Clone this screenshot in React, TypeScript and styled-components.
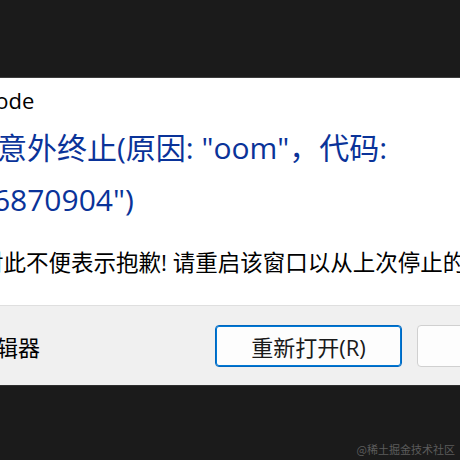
import React from 'react';
import styled, { createGlobalStyle } from 'styled-components';

const GlobalStyle = createGlobalStyle`
  html, body {
    margin: 0;
    padding: 0;
    background: #1b1b1b;
  }
  body {
    width: 460px;
    height: 460px;
    overflow: hidden;
    font-family: "Open Sans", "Noto Sans CJK SC", sans-serif;
  }
`;

const Screen = styled.div`
  position: relative;
  width: 460px;
  height: 460px;
  overflow: hidden;
  padding-top: 77px;
  box-sizing: border-box;
`;

const Dialog = styled.div`
  width: 760px;
  margin-left: -150px;
  background: #ffffff;
  border-top: 1px solid #3d3d3d;
  border-bottom: 1px solid #2e2e2e;
`;

const TitleBar = styled.div`
  display: flex;
  align-items: center;
  height: 44px;
  margin-left: -6px;
  font-size: 22px;
  color: #000000;
`;

const Content = styled.div`
  padding: 0 0 27px 86px;
`;

const Heading = styled.h1`
  margin: 0 0 0 1px;
  font-size: 30px;
  font-weight: 400;
  line-height: 52px;
  color: #0a3399;
`;

const Message = styled.p`
  margin: 22px 0 0 0;
  font-size: 22.5px;
  line-height: 30px;
  color: #000000;
  white-space: nowrap;
`;

const Footer = styled.div`
  display: flex;
  align-items: center;
  justify-content: space-between;
  height: 79px;
  padding-left: 8px;
  background: #f0f0f0;
  border-top: 1px solid #dfdfdf;
`;

const CheckLabel = styled.label`
  display: flex;
  align-items: center;
  gap: 8px;
  font-size: 22px;
  color: #000000;
`;

const CheckBox = styled.span`
  width: 18px;
  height: 18px;
  border: 1px solid #8a8a8a;
  border-radius: 3px;
  background: #ffffff;
`;

const Buttons = styled.div`
  display: flex;
  gap: 15px;
  margin-right: 6px;
`;

const Button = styled.button<{ $primary?: boolean }>`
  width: 187px;
  height: 42px;
  padding: 0;
  border: 1px solid ${(p) => (p.$primary ? '#0067c0' : '#d0d0d0')};
  box-shadow: ${(p) => (p.$primary ? 'inset 0 0 0 1px #0078d4' : 'none')};
  border-radius: 4px;
  background: #fdfdfd;
  font-family: inherit;
  font-size: 22px;
  color: #1a1a1a;
`;

const Watermark = styled.div`
  position: absolute;
  right: 5px;
  bottom: 3px;
  font-size: 11px;
  color: #5c5c5c;
  font-family: "Noto Sans CJK SC", sans-serif;
`;

export default function App() {
  return (
    <>
      <GlobalStyle />
      <Screen>
        <Dialog>
          <TitleBar>Visual Studio Code</TitleBar>
          <Content>
            <Heading>
              窗口意外终止(原因: "oom"，代码:
              <br />
              "-536870904")
            </Heading>
            <Message>我们对此不便表示抱歉! 请重启该窗口以从上次停止的位置继续。</Message>
          </Content>
          <Footer>
            <CheckLabel>
              <CheckBox />
              不要恢复编辑器
            </CheckLabel>
            <Buttons>
              <Button $primary>重新打开(R)</Button>
              <Button>关闭(C)</Button>
            </Buttons>
          </Footer>
        </Dialog>
        <Watermark>@稀土掘金技术社区</Watermark>
      </Screen>
    </>
  );
}
